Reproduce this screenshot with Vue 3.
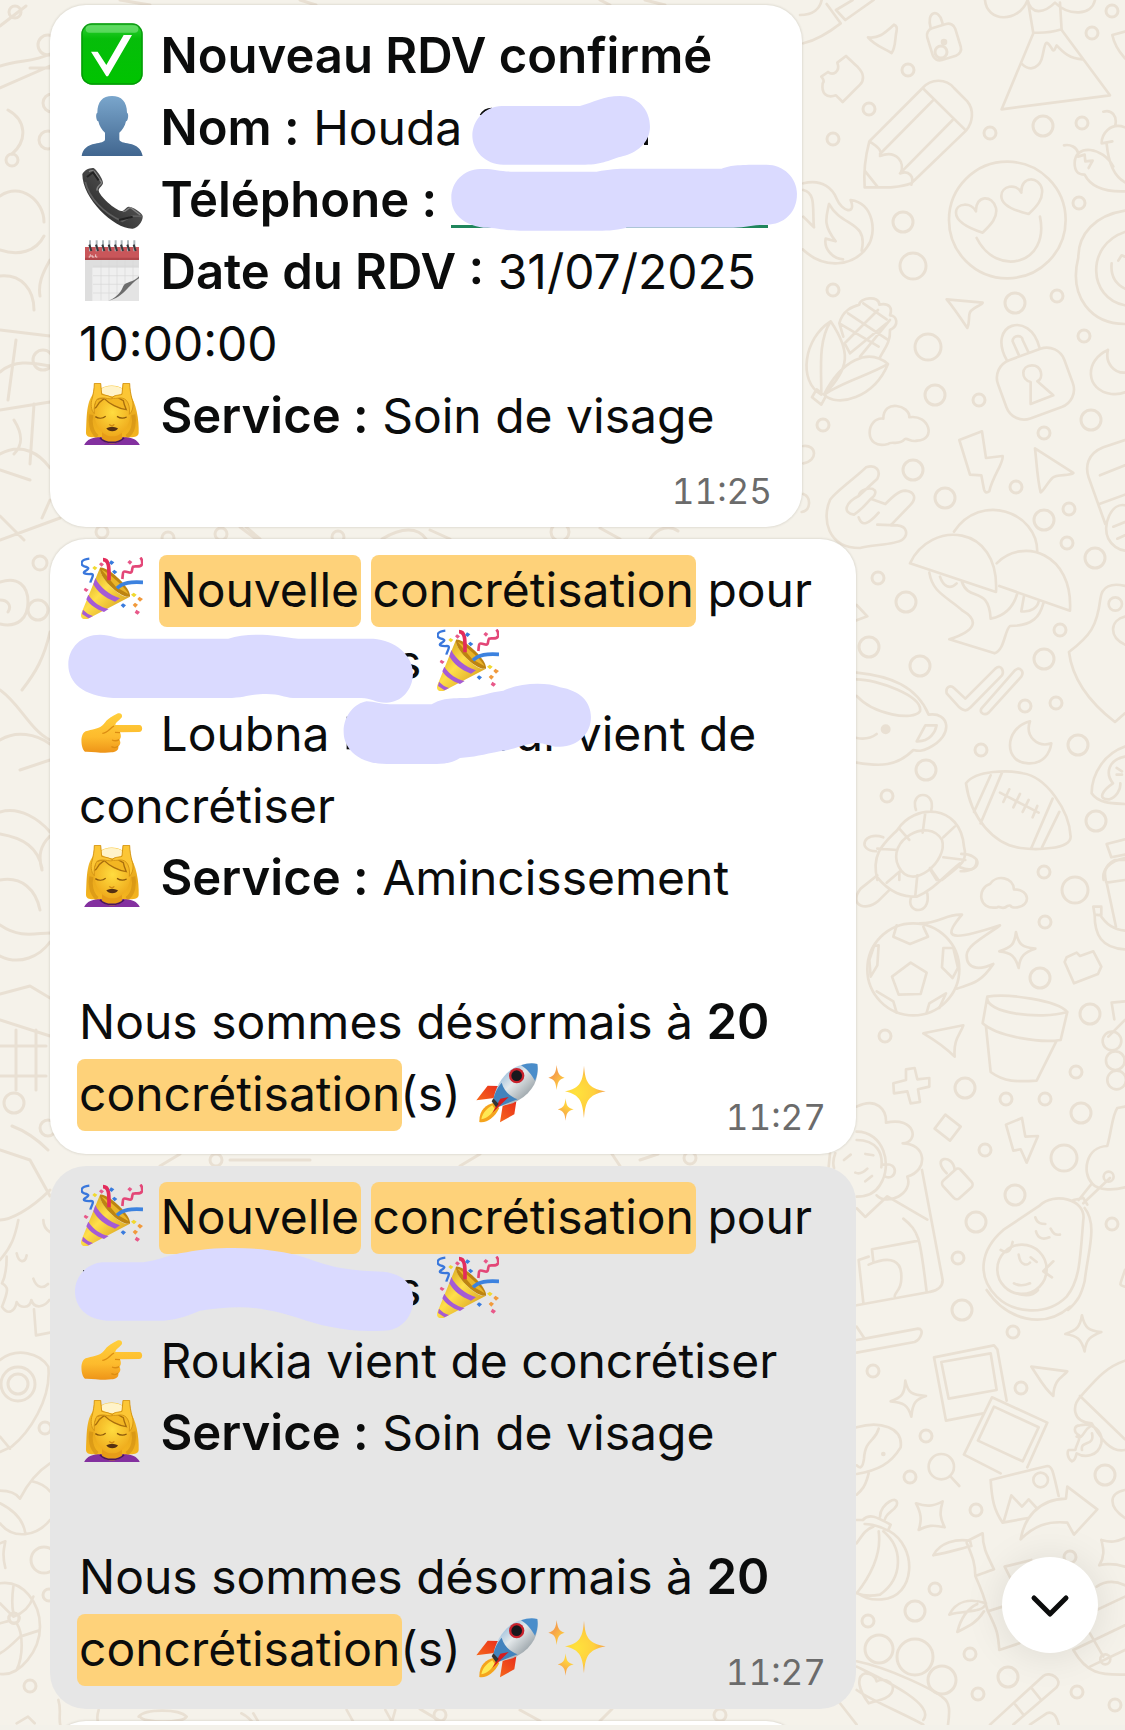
<script setup>
// Small rings scattered over the wallpaper: x, y, radius
const rings = [
  [941, 52, 6], [908, 70, 6], [869, 109, 6], [833, 139, 6], [990, 133, 6], [1043, 126, 10], [1082, 123, 6],
  [1092, 33, 6], [1112, 11, 6], [903, 222, 10], [913, 266, 13], [833, 290, 6], [1079, 203, 6], [1015, 303, 10],
  [1057, 296, 6], [928, 347, 13], [935, 395, 10], [979, 400, 6], [1084, 336, 6], [1091, 420, 10], [823, 425, 6],
  [1044, 433, 6], [913, 470, 10], [945, 498, 10], [1016, 487, 6], [1069, 509, 6], [1044, 520, 10], [1067, 543, 6],
  [1095, 558, 10], [878, 578, 6], [906, 602, 10], [869, 647, 10], [920, 666, 10], [1060, 630, 6], [1044, 659, 10],
  [1025, 706, 6], [1056, 703, 6], [1078, 745, 10], [981, 750, 6], [926, 770, 10], [887, 796, 6], [1096, 821, 10],
  [1044, 872, 6], [1075, 890, 13], [1045, 922, 6], [1040, 978, 10], [1090, 1014, 10], [885, 1036, 6],
  [965, 1088, 10], [1006, 1099, 6], [1045, 1099, 6], [1076, 1072, 6], [1081, 1113, 10], [985, 1150, 6],
  [1064, 1158, 13], [1015, 1195, 10], [976, 1222, 10], [1112, 1224, 6], [958, 1258, 6], [962, 1310, 10],
  [1013, 1332, 6], [873, 1371, 6], [1021, 1388, 6], [926, 1436, 6], [910, 1477, 6], [976, 1510, 6],
  [1105, 1475, 10], [1070, 1557, 6], [935, 1589, 6], [915, 1611, 10], [868, 1621, 6], [879, 1649, 14],
  [915, 1657, 18], [942, 1680, 14], [970, 1654, 6], [1008, 1677, 10], [978, 1694, 6], [1077, 1692, 6], [1115, 1705, 6],
  [48, 45, 10], [52, 103, 9], [48, 140, 9], [43, 360, 10], [15, 12, 6], [12, 160, 6], [40, 563, 7], [38, 610, 10],
  [14, 1103, 10], [48, 1128, 8], [18, 1384, 17], [18, 1384, 10], [45, 1428, 6], [44, 1560, 13], [49, 1595, 6],
  [30, 1686, 6], [14, 1618, 5], [102, 532, 6], [168, 538, 6], [221, 534, 6], [338, 537, 6], [216, 1160, 6],
  [690, 1158, 6], [440, 1715, 6], [560, 532, 9], [720, 1715, 6],
]
</script>

<template>
  <div class="screen">
    <svg class="defs" width="0" height="0" aria-hidden="true">
      <defs>
        <linearGradient id="gGreen" x1="0" y1="0" x2="0" y2="1"><stop offset="0" stop-color="#35d13a" /><stop offset=".25" stop-color="#06bd0a" /><stop offset="1" stop-color="#00c400" /></linearGradient>
        <linearGradient id="gBlue" x1="0" y1="0" x2="0" y2="1"><stop offset="0" stop-color="#7aa6cc" /><stop offset="1" stop-color="#41668f" /></linearGradient>
        <linearGradient id="gPhone" x1="0" y1="1" x2="1" y2="0"><stop offset="0" stop-color="#1d1d1d" /><stop offset=".5" stop-color="#444" /><stop offset="1" stop-color="#666" /></linearGradient>
        <linearGradient id="gGold" x1="0" y1="0" x2="1" y2="1"><stop offset="0" stop-color="#c98f0c" /><stop offset=".45" stop-color="#ffdf4a" /><stop offset="1" stop-color="#c98a10" /></linearGradient>
        <linearGradient id="gHand" x1="0" y1="0" x2="0" y2="1"><stop offset="0" stop-color="#ffcf3c" /><stop offset=".6" stop-color="#fdbb2d" /><stop offset="1" stop-color="#ee9418" /></linearGradient>
        <linearGradient id="gHair" x1="0" y1="0" x2="0" y2="1"><stop offset="0" stop-color="#f8c534" /><stop offset=".6" stop-color="#e9a91c" /><stop offset="1" stop-color="#f5b51f" /></linearGradient>
        <radialGradient id="gFace" cx=".5" cy=".4" r=".6"><stop offset="0" stop-color="#ffdc3f" /><stop offset="1" stop-color="#efaa1c" /></radialGradient>
        <linearGradient id="gRocket" x1="0" y1="0" x2="1" y2="1"><stop offset="0" stop-color="#5c9bd2" /><stop offset=".45" stop-color="#e3e8ea" /><stop offset="1" stop-color="#66727a" /></linearGradient>
        <linearGradient id="gFire" x1="1" y1="0" x2="0" y2="1"><stop offset="0" stop-color="#e2151b" /><stop offset="1" stop-color="#ff8a1c" /></linearGradient>
        <radialGradient id="gStar"><stop offset="0" stop-color="#ffe23c" /><stop offset=".6" stop-color="#ffd03e" /><stop offset="1" stop-color="#f6a24a" /></radialGradient>
      </defs>
      <symbol id="e-check" viewBox="0 0 186 186">
        <rect x="1" y="1" width="184" height="184" rx="32" fill="url(#gGreen)" />
        <rect x="3" y="3" width="180" height="180" rx="30" fill="none" stroke="#058a0a" stroke-width="4" opacity=".75" />
        <rect x="14" y="7" width="158" height="22" rx="11" fill="#8be88d" opacity=".55" />
        <path d="M30 86l20 0 26 40L128 36h25L81 160h-5z" fill="#fff" />
      </symbol>
      <symbol id="e-person" viewBox="0 0 186 186">
        <path d="M93 3c28 0 45 17 45 50 6 2 4 24-3 26-3 15-11 26-20 34v20c0 8 14 11 30 13 22 4 36 15 40 37H2c3-22 18-33 40-37 16-2 30-5 30-13v-20c-9-8-17-19-20-34-7-2-9-24-3-26C49 20 65 3 93 3z" fill="url(#gBlue)" />
      </symbol>
      <symbol id="e-phone" viewBox="0 0 186 186">
        <path d="M4 22C8 10 26 1 38 3c6 2 28 32 28 44 0 9-13 15-13 23 0 16 51 61 68 62 10 0 14-12 22-13 12 0 41 18 42 28 2 13-14 37-30 38C100 187 4 95 4 22z" fill="url(#gPhone)" />
        <path d="M24 14c10-6 14-4 18 2l20 30c-2 9-17 12-14 25" fill="none" stroke="#858585" stroke-width="4" />
        <path d="M13 45c10 47 55 94 111 118l30-16 29 1" fill="none" stroke="#606060" stroke-width="5" />
        <path d="M125 134c13 0 16-12 24-12l29 22" fill="none" stroke="#858585" stroke-width="4" />
        <path d="M114 159l41-10M18 30l18-14 17 24" fill="none" stroke="#222" stroke-width="6" />
      </symbol>
      <symbol id="e-calendar" viewBox="0 0 186 186">
        <path d="M12 62h162v66c-12 24-35 52-62 58H12z" fill="#efefef" />
        <path d="M12 60h162v26H34v100H12z" fill="#dedede" />
        <path d="M36 82h136M36 110h136M36 136h110M36 162h80M60 64v120M84 64v120M108 64v120M132 64v94M156 64v64" stroke="#d8d8d8" stroke-width="2" />
        <rect x="12" y="24" width="162" height="39" fill="#c9565a" /><path d="M12 56h162v7H12z" fill="#b04549" />
        <path d="M23 54h4l1-8m5 2v6h7m4-8v8h5" fill="none" stroke="#efd3d3" stroke-width="3" />
        <path d="M174 108c-16 24-39 17-46 33-7 24-28 38-48 45h94z" fill="#e4e4e4" />
        <path d="M174 112c-15 19-41 15-48 31-8 20-24 34-44 42 46-8 62-50 92-67z" fill="#6d6d6d" />
        <path d="M27 4v33M47 4v33M66 4v33M85 4v33M104 4v33M122 4v33M141 4v33M160 4v33" stroke="#aeb8bc" stroke-width="6" />
        <path d="M25 17l6 19M45 17l6 19M64 17l6 19M83 17l6 19M102 17l6 19M120 17l6 19M139 17l6 19M158 17l6 19" stroke="#37393d" stroke-width="6" />
      </symbol>
      <symbol id="e-massage" viewBox="0 0 186 186">
        <path d="M9 187c8-18 24-24 50-26h67c28 2 42 8 51 26z" fill="#83309f" />
        <path d="M15 150C18 95 15 42 50 22 80 0 120 2 145 34c20 22 30 78 28 116-1 13-17 13-31 13H44c-16 0-29-1-29-13z" fill="url(#gHair)" />
        <path d="M31 95c-5 20-1 52 18 66M157 95c5 20 1 52-20 66" fill="none" stroke="#c98710" stroke-width="12" opacity=".5" />
        <path d="M63 134h60v36c-17 15-43 15-60 0z" fill="#e79c18" />
        <path d="M57 164c15 19 56 19 72 0" fill="none" stroke="#4a1760" stroke-width="5" />
        <path d="M40 86c0-28 20-45 53-45s56 17 56 45c0 38-22 74-55 74S40 124 40 86z" fill="url(#gFace)" />
        <path d="M46 72c8-18 17-20 24-25 14 15 42 30 66 33-5-11-8-20-9-27l-31-17-51 13-9 30z" fill="#f3b622" stroke="#a96f0d" stroke-width="4" />
        <path d="M55 22c18-17 55-17 76 0-9 14-25 18-36 18-17 0-31-6-40-18z" fill="#fff3c9" />
        <path d="M40 1h19l3 33c12 4 27 3 32 13-12 3-28-7-45 1-8 9-11 24-9 44-11-11-11-32-7-44 4-15 7-32 7-47zM146 1h-20l-3 33c-12 4-23 1-30 11 12 5 29-7 43 7 8 9 11 24 9 42 12-11 14-32 8-46-4-15-7-32-7-47z" fill="#fcc635" stroke="#d69615" stroke-width="3" />
        <path d="M43 101c9 6 22 6 31-1M108 100c9 6 19 7 29 2" fill="none" stroke="#8b580b" stroke-width="4" />
        <path d="M85 124c4 5 11 5 15 0" fill="none" stroke="#d18a15" stroke-width="4" />
        <path d="M76 136c11-6 23-6 35 0-5 12-29 12-35 0z" fill="#553012" />
      </symbol>
      <symbol id="e-party" viewBox="0 0 186 186">
        <path d="M57 32c-6 24 63 98 90 87L24 184c-14 7-28 1-23-15z" fill="url(#gGold)" />
        <path d="M57 32c23-5 94 61 90 87-28 7-96-60-90-87z" fill="#bd8411" />
        <path d="M62 38c14 3 79 61 80 73l-36-20z" fill="#eab52a" />
        <path d="M43 63c13 28 42 50 74 61l-15 10C72 123 50 105 37 82zM22 113c15 23 37 38 61 43l-14 9c-23-8-41-20-53-38zM6 158c9 9 18 16 30 19l-13 7-20-13z" fill="#a55bd4" />
        <path d="M66 8c20 0 18 27 18 62" fill="none" stroke="#e32c5c" stroke-width="11" />
        <path d="M108 94c17-18 42-20 78-18" fill="none" stroke="#3c82df" stroke-width="11" />
        <path d="M25 5C-4 8-2 23 10 28c15 4 16 6 3 14-10 6-2 10 17 9 13 0-1 17-2 26" fill="none" stroke="#3977dc" stroke-width="7" />
        <path d="M124 66c3-20-2-27 18-20 15 5 9-10 14-17 8-3 24 4 27-8 2-9 0-14-5-19" fill="none" stroke="#e34677" stroke-width="8" />
        <path d="M90 10l10 6-8 8-8-6zM100 38l9 7-8 7-8-8zM126 139l9 6-8 8-8-8z" fill="#397bdd" />
        <path d="M12 92l11 6-7 7-8-6zM146 9l8 6-7 8-8-7zM60 16l9 6-7 7-8-7zM166 158l11 7-7 8-9-6z" fill="#e85889" />
        <path d="M40 27l9 5-7 8-8-7zM158 107l9 6-8 8-9-8z" fill="#f1d92e" />
        <path d="M175 119l11 7-9 8-8-8zM162 137l9 6-8 9-8-8z" fill="#f19a3c" />
      </symbol>
      <symbol id="e-point" viewBox="0 0 186 186">
        <path d="M14 91c17-7 43-6 55-23 10-14 27-24 42-31 11-3 16 8 9 15-6 7-16 12-17 20h72c11 0 12 21-1 21l-57 1c5 11 2 18-2 22 6 8 2 16-3 20 2 12-9 18-21 18-27 4-54-3-79-2-12-8-17-52 2-61z" fill="url(#gHand)" />
        <path d="M64 97c14 0 22-15 35-22M102 94l15 1M93 117c9 4 17 2 22-1M91 137c8 4 15 3 20-1" fill="none" stroke="#dc8d12" stroke-width="4" />
      </symbol>
      <symbol id="e-rocket" viewBox="0 0 186 186">
        <path d="M67 75L35 74 1 118l54-7zM121 121l-6 39-43 24 8-50z" fill="url(#gFire)" />
        <path d="M52 126c-20 5-43 19-42 57 22 4 46-13 60-42z" fill="#f5a41d" />
        <path d="M49 133c-15 9-30 23-33 42 18-4 29-14 40-31z" fill="#ffe954" />
        <path d="M184 9c7 52-19 92-74 118l-42 10-16-21c6-39 32-81 67-98 22-10 44-14 65-9z" fill="url(#gRocket)" />
        <path d="M184 9c3 17 0 34-7 50-10-17-24-36-42-46 17-6 34-8 49-4z" fill="#4a8dca" />
        <path d="M77 65c7 25 24 41 48 50l-57 22-16-21c3-18 11-35 25-51z" fill="#4283bd" />
        <circle cx="122" cy="44" r="23" fill="#c8222c" /><circle cx="122" cy="44" r="16" fill="#17181d" />
        <path d="M98 108l-49 48 24-43z" fill="#d41d20" /><path d="M52 112l16 17-8 10-13-18z" fill="#333" />
      </symbol>
      <symbol id="e-sparkles" viewBox="0 0 186 186">
        <path d="M120 14c4 47 10 67 65 77-55 10-61 34-65 81-4-47-10-71-57-81 47-10 53-30 57-77zM38 12c3 23 6 33 24 38-18 5-21 13-24 37-3-24-6-32-25-37 19-5 22-15 25-38zM65 112c2 21 5 29 24 33-19 5-22 13-24 34-3-21-6-29-24-34 18-4 21-12 24-33z" fill="url(#gStar)" />
      </symbol>
    </svg>

    <main class="chat">
      <svg class="wallpaper" aria-hidden="true">
        <g class="rings"><circle v-for="(r, i) in rings" :key="i" :cx="r[0]" :cy="r[1]" :r="r[2]" /></g>
        <g transform="translate(800 0) scale(.3333)">
          <path d="M0 45c40 0 60-20 65-45M80 12l42 58C90 95 50 120 10 130M108 30l28 30 85-60M108 30l50-30" />
          <path d="M204 112c30 4 45-8 78-38 8 3 10 8 8 18-6 24-2 50-15 67-25-15-50-22-71-47z" />
          <rect x="388" y="76" width="88" height="100" rx="22" transform="rotate(-17 432 126)" /><path d="M392 84c-14-50 24-60 34-20l2 8" /><circle cx="432" cy="126" r="6" class="dot" />
          <path d="M138 168l36 34c20 20 18 40 6 52l-52 52-20-20c-30 10-44-6-40-36 8-8 0-14-4-20l20-14c14 12 38 0 28-28z" />
          <path d="M208 424L368 264c24-28 70-30 94 0l40 40c20 24 18 62-4 88L334 550c-40 16-90 12-140 12-4-50 4-100 14-138zM368 264l130 128M402 298L240 462M458 360L300 520M208 424c24 14 40 30 32 44 50-20 76 20 62 52 24-10 42 10 32 34M194 512l40 50" />
          <path d="M555 0c5 66 100 72 128 0M683 0c10 46 50 40 82 8 40 40 110 40 120-8M685 10l15 90-95 228 325-42-145-196-5-82M700 98c40 2 60-2 85-10M664 190c30 30 58 10 64-24 8-40 8-50 28-20 6 16 12-8 14-10 20 22 40 40 78 42" />
          <path d="M975 95l-38 10c6 30 20 50 38 70M910 335c26-8 42 14 36 40M975 382c-44-16-70 20-70 48l32-6M920 432c6 60 26 100 55 115M792 436c20-4 38 6 42 22M940 500c-30-60-116-70-116-10 0 30 16 34 30 34 20 40 70 52 121 50M834 470l20-6 2 20 22-2-12 22" />
          <circle cx="622" cy="660" r="175" />
          <path d="M548 698c-60-20-80-40-80-60 0-30 46-32 60-4-2-50 50-50 60-10 6 30-18 52-40 74zM686 642c-60-14-82-34-82-54 0-30 44-40 60-10-2-52 54-50 62-10 4 30-16 52-40 74zM530 714c60 120 220 80 190-64" />
          <path d="M10 550c60-15 90 20 100 46 16 40 60 50 42 4 70 10 80 100 50 140-40 60-130 70-194 8M10 570c40 10 26 60 32 112L10 650M185 752c20-90-60-70-98-140-8 40-20 60 20 112l-30-8c-6 30 20 60 52 62" />
          <path d="M975 632c-90 14-140 70-140 140-30 120 40 200 140 200M975 696c-120 40-110 200 0 220M935 790c-4 40 16 64 40 76M955 782l10-16 10 4" />
          <path d="M440 898l108 10c-4 10-40 16-40 36-2 20 0 26-6 40-20-30-40-60-62-86z" />
          <path d="M92 964c-80 50-100 180-28 220 0-80-10-160 28-220 60 90 60 140-20 220 40 40 150 10 192-92-60-50-140-10-192 92 60-40 140-60 192-92M50 1168l28 20-14 26-28-22zM118 970c10-40 40-50 60-56 0-20 60-30 60 0 30-6 40 10 32 32 20 0 30 30 0 44 2 40-20 60-32 86M118 970l118 70M144 940l120 80M190 910l70 48M134 1030l100-100M150 1060l110-90M180 1070l90-110M130 1010l-12-40M150 1060l-16-30" />
          <path d="M620 1080c-60-110 70-150 98-38M656 1064l-18-40c0-20 30-20 30-4l18 38" /><rect x="600" y="1058" width="212" height="186" rx="56" transform="rotate(-20 706 1150)" /><path d="M692 1146c-30-6-30-50 4-50 30 0 36 40 16 48l48 42-68 26z" />
          <path d="M924 1050c-70 30-70 120 10 132 20 2 30 0 41-5M924 1050c-10 40 20 70 51 68" />
          <path d="M250 1256c0-60 80-40 78-4 60-10 82 68 24 70-20 6-30-10-38-4-16 20-40 4-50 14-76 20-66-82-14-76z" />
        </g>
        <g transform="translate(800 430) scale(.3333)">
          <path d="M478 30l68-26 12 80 50-6c4 20-30 60-40 106-10 8-14 0-16-6l-8-42-34-2zM705 55l115 74c-10 10-50 2-62 14-14 12-24 36-36 44-10-40-12-90-17-132z" />
          <path d="M90 210c10-20 80-70 108-98 30-10 46 10 34 34l-56 52c-40 20-50 50-14 56 30-20 40-40 60-56 20-30-40-30-46 0M256 222l-40-14M256 222c20-20 40-40 60-40 30 4 34 24 14 44l-58 60M176 262c10 30 30 20 60-14M232 284l60 2c30 2 34 30 14 44-20 14-90 14-126 24-100 0-114-90-90-144M10 48c40-5 45 45 0 52M10 192c25 10 22 50-5 54" />
          <path d="M330 400c60-130 270-120 258 86zM462 305c80-120 250-60 250 60M590 400c80-80 230-30 220 142L598 468M388 428c10 60 50 70 100 114 50 30 40 60-40 86l136 42c30-10 30-70 46-82 70 0 90-30 100-68M486 456c20 60 80 10 86 110 50-10 70-40 80-76M420 440c10 30 30 40 50 20M672 498l-8 46c30 4 50-14 52-30" />
          <path d="M440 790c-4-20 12-26 22-16l34 32 90-90c20-16 26 10 20 20l-94 96c-12 12-20 12-34 0zM544 836l102-116c14-10 28 4 18 20l-98 108c-12 10-28 2-22-12z" />
          <path d="M690 874c-80 20-80 130 0 126 40 0 60-30 64-60-40 14-80-20-64-66z" />
          <path d="M170 525l32 34-32 12M170 728c100 10 180 40 216 126 60-10 80 60 0 100-20 10-30 10-46 6-50 50-100 50-170 38M170 748c60 0 200 50 190 96-20 30-140 10-190-46M350 934l26-48h34c-4 20-20 50-60 48zM170 924c20 4 44 0 60-12" /><circle cx="257" cy="898" r="11" class="dot" />
          <path d="M498 1060c30-40 130-40 170-30 70 10 140 110 144 190 0 40-110 40-150 34-80-10-150-90-164-194zM572 1036l-50 110M606 1028l-64 152M758 1106l-64 148M778 1146l-52 106M600 1088l116 60M628 1078l-18 38M660 1092l-20 40M686 1110l-18 36M712 1128l-14 34" />
          <path d="M975 30l-65 22c-50 20-54 60-44 90l50 140M900 136l75-30M898 222l77-28M975 226c-40-10-70 60-50 100 10 20 30 34 50 36M940 290l35-14M952 326l23-10M975 468c-40-10-70 0-74 40-10 80-30 110-94 158 10 80 60 150 138 210l30-26M975 560c-45 10-50 60 0 84" /><circle cx="946" cy="522" r="20" />
          <path d="M975 950c-60 20-100 80-100 140 20 30 60 30 100 32M975 980c-50 10-60 50-36 80-30 20-50 50-10 48 20-6 34-30 32-48M950 1014l16 10M950 1034h16" />
          <path d="M348 1140c-20-60 60-60 46 0M250 1222c-60-20-80 40-22 42M484 1272c60 0 70 50-2 52M232 1350c-20-80 20-110 60-150 50-80 190-80 200 50 14 50-20 60-66 100M296 1310c-40-80 90-150 130-80 20 60-90 160-130 80M376 1148l-8 60M296 1194l32 36M464 1190l-34 32M232 1256l60 4M430 1282l66 8M390 1318l20 32M298 1328v22" />
          <path d="M975 1228l-55 14 14 40 41-8M975 1284c-50 10-70 40-64 66" />
        </g>
        <g transform="translate(800 860) scale(.3333)">
          <path d="M230 50c40 50 80 60 120 60 50-20 80-60 130-100M352 46l-6 60M300 34l-40 34M390 24l28 40M232 46l-50 40c-40 50 20 74 60 30l28-28M334 110c-20 50 60 60 48-10M530 0c0 30-20 34-50 22" />
          <path d="M570 72c20-30 70-20 72 16 50 0 50 50 10 54-30 4-10-10-30-4-14 14-24-2-30 4-60 10-60-60-22-70z" />
          <circle cx="340" cy="328" r="138" />
          <path d="M332 308l48 30-18 64-66 2-20-54zM290 196l-10 34 50 22 54-22-14-30M430 264h30l14 60-16 30-32-32zM236 256l-4 60-20 34-4-50 14-42zM230 394l50 30 10 34M380 458l8-28 50-30-20 44" />
          <path d="M360 190c60 0 80-30 126-26-50 60-60 90 114 32-40 30-100 60-100 90 0 50 50 40 80 26-40 60-70 60-110 74" />
          <path d="M648 216c8 40 20 46 58 50-30 10-46 20-50 58-10-36-22-46-58-50 36-12 46-20 50-58zM800 292l30-14 10 10 40-14 24 46-10 22-72 28-28-64z" />
          <path d="M562 410c60-10 210 10 240 46l-20 84c-60 10-190-10-234-50zM562 410c-10 50 160 70 240 46M558 500l14 136c40 30 80 30 138 26l60-120" />
          <path d="M370 520l120-24c-10 30-30 40-26 94-30-30-60-50-94-70zM318 628l26-4 8 34 36-4v26l-34 8 6 38-28 4-10-36-40 6-2-30 38-10zM436 764l46 36-32 42-46-36zM618 794l48-20 10 56 38-2-34 80-18-40-22 4z" />
          <path d="M170 740c60-30 90 10 88 48 90-20 100 60 50 62 70 0 80 80 14 100 20 50-60 90-92 56M170 815c80 0 110 100 70 160-15 25-40 35-70 35M170 840c60 0 80 40 74 82M90 880l-4 40M106 880c-8 20-8 30-4 44M250 914c50-10 40 50 6 36M132 900l20-16M196 882l24 4M166 938c14 6 24 0 36-12M196 964l20-16M170 1045l26 26 66-62 120 70M310 1076c50 40 50 60 70 220M366 930l62 330c0 30-30 34-40 36L170 1336M216 1168l140-26M216 1168l4 36M206 1214c70-30 100-10 98 40 0 40-20 40-20 56M176 1200l14 128M176 1200l30-10" />
          <path d="M440 940c-50-50 20-60 24-10" /><rect x="436" y="936" width="72" height="72" rx="12" transform="rotate(-42 472 972)" />
          <path d="M720 1036c40-40 140-20 130 44-10 120-10 180-50 230-60 60-160 50-210 0-60-60-50-140 20-200zM854 1044c40 50 10 130 0 220-10 40-20 60-50 86M836 1020l40-50M850 1030l80-76M820 1020l30-6 12 20M876 970c-30-30-20-110 46-112 14-50 14-90 30-114l23-4M876 970c20 24 70 20 99 12" /><circle cx="666" cy="1228" r="74" /><circle cx="926" cy="950" r="15" />
          <path d="M602 1170c20 14 30 4 36-24M760 1204l-30 30 26 18M706 1072c6 20 20 20 30 20M708 1114c6 26 26 24 40 18M752 1106c8 16 14 20 28 18M656 1184c6 40 30 30 34 24M692 1192l18 14M642 1270c14 8 34 6 48 0" />
          <path d="M975 60l-55 8 28 132M880 140h24v26l-20-2zM884 164c0 60 20 100 90 104M900 164c20 30 40 44 75 48M975 0l-30 0c-40 20-30 50-26 68M975 424l-40 4 8 50M975 480l-50 50M975 1230c-16 50-20 44 0 50" />
          <circle cx="936" cy="543" r="28" /><circle cx="946" cy="602" r="28" /><circle cx="950" cy="660" r="28" />
        </g>
        <g transform="translate(800 1290) scale(.3333)">
          <path d="M560 0c60 90 170 120 250 50M650 10c30 10 50 6 64-10M170 110l24 36 160-30c20 0 10 30-10 40L170 188M170 150l24-4" />
          <path d="M846 76c8 38 20 46 58 50-32 12-46 22-50 58-10-38-22-46-58-52 36-12 44-22 50-56zM316 272c8 38 20 42 62 46-32 10-40 22-44 62-10-36-24-42-62-46 34-12 42-22 44-62zM348 640c30 10 50 10 80-6-10 34-8 50 6 78-36-8-50-6-78 8 10-30 8-50-8-80zM904 750c30 8 44 6 71-6M904 750c8 30 10 50-6 76 26-6 50-4 77 4" />
          <path d="M694 230l108 14c-10 16-40 20-42 74-30-26-46-60-66-88z" />
          <path d="M402 202l180-36 10 12 28 154M402 202l36 190 112-22M424 216l148-26 18 110-144 26zM576 322l166 76-60 134M576 322l-84 172 110 56M582 350l134 62-48 102-134-62zM572 570l170-42c14 0 16 10 34 90M572 570c4 60 10 90 36 128l76-14M612 692l22-76 32 34 20-22 24 26M662 748c10-60 50-120 136-122l4-36 90 68-70 76-20-36c-60-6-100 10-140 50z" /><circle cx="722" cy="570" r="22" />
          <circle cx="424" cy="530" r="38" /><path d="M452 560l26 28" />
          <path d="M170 412c70-20 140 0 132 60-30 50-70 70-132 80M236 416c-10 40-40 30-44 90-4 30-12 30-22 20M206 550c-10 40-20 50-36 64M240 680c0-40 60-70 50-34-10 20-30 20-36 44M188 690c20-20 40-10 84 14l-8 18c-30-16-50-20-70-20M170 690h20M170 760c20-30 30-44 50-50M236 724c10 70-30 140-66 186M250 724c60 50 60 140-10 190-30 6-50 4-70-4M266 722c90 50 80 200-20 206-40 4-60-10-76-20" /><circle cx="250" cy="492" r="3" class="dot" />
          <path d="M400 796c20-40 70-50 110-44l4 16c-40 10-70 20-114 28M508 750l40-20c0 40 10 60 34 108l-56 20c0-40-10-60-26-100M526 858c40 90 30 90 38 106l44-14M564 964c30 60 30 70 34 116l60-20M448 974c20-40 60-50 110-34-10 30-60 20-110 34zM472 1026c10-40 30-70 60-84M472 1026c40-20 60-30 80-62M614 830l80-20M614 830l20 40" />
          <path d="M975 212c-60 20-90 60-130 104-30 30-30 80 30 84 20 30 50 90 100 80M840 318l135 130M826 480c4-20 14-26 12-44-20-10-16-30 2-30 40-10 70 20 64 54-10 40-50 44-74 30-4 16-6 20-14 24-16-10-14-30-10-34zM830 440c20 10 20-20 40-30M846 480c-6-30 40-10 30-50M975 600c-50 10-50 50 0 84M890 890c30-20 60-16 85-4M890 960l85-40M820 1080c40 70 80 76 155 74M820 1080l155-74M870 1130l105-50M870 1030l40 70" /><circle cx="916" cy="1108" r="15" />
          <path d="M170 1114c100 20 240 90 260 110 20 14 20 40 14 80M170 1130c60 30 240 110 200 160M170 1200c40 30 140 70 200 104M206 1240c-30-40-40-80-10-90 20 0 30 10 34 24 30-14 60 10 44 36-14 20-40 20-68 30zM570 1304l160-146c20-16 60 10 40 34l-130 112M646 1244l24 30M696 1196l26 32M690 1304l50-34c20-8 30 10 36 34M120 1240l50 64" />
        </g>
        <g transform="translate(0 1220) scale(.3333)">
          <path d="M55 0c-10 50-20 80-55 120M130 0c0 20 10 30 20 36M50 100c6 30 26 30 30 6M100 176c10 30 30 30 44 16M20 110c0 30-4 60-14 80 20 10 20 20 0 70 20 30 40 10 44-14 10 20 40 20 44-6 10 30 40 20 54 0M102 268l6 78 42-8" />
          <path d="M0 420c50-40 120-20 145 20 10 100-60 200-110 240L0 696M0 650l30 36M0 812c30 0 50 10 60 24 20-40 50-80 90-106M96 784c20 4 40 14 54 30M0 850c40 20 70 50 76 90M0 910c40 50 110 40 150-10M0 970l16-6c-4 20-10 40 0 80" />
          <path d="M0 1090c70-10 120 60 120 130S60 1370 0 1362M0 1150l40 40c30-10 50-30 60-60M0 1210l30-8M50 1210c20 30 20 100 0 140M60 1250l56-18M0 1300c20-10 40-30 60-50M40 1100c-4 30-4 60 0 80" /><circle cx="42" cy="1195" r="16" />
          <path d="M50 1510l34-20 20 20M175 1440c10 30 0 50 6 76M296 1470c-6 20-6 30 0 40M416 1490c20-24 120-24 144 0M420 1490c10 20 130 20 140 0M724 1480c20 10 30 20 40 36M760 1480l20 34M1040 1470l20 36M1156 1470l20 36 10-36" />
        </g>
        <g class="edge">
          <path d="M0 26l26-20M0 66c18-6 34-4 50-12M0 88l50-22M50 68H30M8 110c18 10 20 30 4 44M0 196c20-14 44 4 44 26M0 250c18 6 36 2 44-14M50 260c-8 14-12 24-10 36M0 276c22-2 34 14 34 34M0 330l50 6M0 372c14-12 30-10 50-6M16 340l-8 60M0 410l50-8M34 404l-4 60M0 454c22-12 40 0 50 14M0 470l30 10M14 420c10 16 8 26 0 34M50 500l-8 18M0 516l24 24M0 540l60-22" />
          <path d="M0 582c18-6 28 4 28 20s-10 26-28 22M0 600c8 0 12 6 8 12M50 632c-6 26-14 40-28 58M0 690c20 14 30 40 50 50M0 740c16-10 36-6 50 4M20 770l30-10M0 812c20-6 40 8 50 20M0 834c24 4 38 14 42 34M50 836c-10 10-12 20-8 34M0 880c22-4 36 10 40 30M0 925c20 14 36 8 50 8M0 956c20 10 40 0 50-14M0 994l30-8 20 12M0 1046h46M0 1076h46M16 1030v60M36 1030v60M0 1020l50 16M12 1126c16 6 26 14 36 24M0 1150l30 10 20 36M50 1190c-20 20-40 30-50 30" />
          <path d="M240 527l16 12M246 527l14 12M382 539c20-12 36-12 44 0M430 530l20 9M600 528l20 11M650 539c8-12 20-14 28-8M180 1154l-20 12M230 1160h80M480 1154l-20 12M612 1154l8 12M640 1160l18-6M120 0l30 5M300 0l16 5M600 0l10 5M645 0l20 5M420 1709l20 12M520 1710l20 11M600 1721l12-12" />
        </g>
      </svg>

      <article class="bubble narrow">
        <p class="line"><svg class="emoji"><use href="#e-check" /></svg> <b>Nouveau RDV confirmé</b></p>
        <p class="line"><svg class="emoji"><use href="#e-person" /></svg> <b>Nom :</b> Houda</p>
        <p class="line"><svg class="emoji"><use href="#e-phone" /></svg> <b>Téléphone :</b> <a class="phone" href="#tel" aria-label="Numéro masqué"></a></p>
        <p class="line"><svg class="emoji"><use href="#e-calendar" /></svg> <b>Date du RDV :</b> 31/07/2025</p>
        <p class="line">10:00:00</p>
        <p class="line"><svg class="emoji"><use href="#e-massage" /></svg> <b>Service :</b> Soin de visage</p>
        <time class="time own-row">11:25</time>
        <svg class="scribble" aria-hidden="true">
          <g transform="translate(380 -5) scale(.3333)">
            <path d="M152 346c6-12 20-20 34-20" class="ink thin" /><path d="M654 400v35h-12v-20z" fill="#0b0c0c" />
            <path d="M215 318h235c40-10 70-30 120-30 52 0 90 40 90 92 0 50-45 80-80 88-40 10-60 26-115 26H220c-55 0-93-42-93-88s40-88 88-88zM150 507c40-2 60 8 100 8h250c40-8 60-9 100-9h275c30-12 60-12 135-12 50 0 91 38 91 88 0 56-40 92-91 92-40 0-60 9-100 9H590c-40 9-60 9-100 9H270c-50 0-60-9-110-9-60-10-96-40-96-90 0-46 36-84 86-86z" />
          </g>
        </svg>
      </article>

      <article class="bubble">
        <p class="line"><svg class="emoji"><use href="#e-party" /></svg> <mark>Nouvelle</mark> <mark>concrétisation</mark> pour</p>
        <p class="line"><span class="hidden-name"></span>s <svg class="emoji"><use href="#e-party" /></svg></p>
        <p class="line"><svg class="emoji"><use href="#e-point" /></svg> Loubna <span class="hidden-surname"></span>our vient de</p>
        <p class="line">concrétiser</p>
        <p class="line"><svg class="emoji"><use href="#e-massage" /></svg> <b>Service :</b> Amincissement</p>
        <p class="line"></p>
        <p class="line">Nous sommes désormais à <b>20</b></p>
        <p class="line"><mark>concrétisation</mark>(s) <svg class="emoji"><use href="#e-rocket" /></svg><svg class="emoji"><use href="#e-sparkles" /></svg></p>
        <time class="time">11:27</time>
        <svg class="scribble" aria-hidden="true">
          <g transform="translate(-10 1) scale(.3333)">
            <path d="M925 530v98" class="ink" />
            <path d="M180 284c35 0 45 12 75 12h310c40-14 100-14 145-8 25 2 45 8 65 8h225c65 4 119 50 119 104 0 50-35 88-80 88-35 0-45-14-75-14H760c-30-2-40-12-80-12-60 0-60 12-120 12H220c-90-6-135-46-135-100 0-52 40-90 95-90z" />
            <path d="M980 484C1005 484 1020 493 1050 493H1175C1200 478 1220 474 1280 474C1320 470 1350 456 1390 452C1440 428 1520 426 1560 442C1620 452 1653 485 1653 532C1653 580 1615 620 1560 620C1530 622 1510 604 1480 610C1440 616 1430 628 1380 634C1330 644 1300 652 1260 654C1240 666 1220 672 1190 672H1040C960 672 911 630 911 575C911 525 945 490 980 484z" />
          </g>
        </svg>
      </article>

      <article class="bubble pressed">
        <p class="line"><svg class="emoji"><use href="#e-party" /></svg> <mark>Nouvelle</mark> <mark>concrétisation</mark> pour</p>
        <p class="line"><span class="hidden-name"></span>s <svg class="emoji"><use href="#e-party" /></svg></p>
        <p class="line"><svg class="emoji"><use href="#e-point" /></svg> Roukia vient de concrétiser</p>
        <p class="line"><svg class="emoji"><use href="#e-massage" /></svg> <b>Service :</b> Soin de visage</p>
        <p class="line"></p>
        <p class="line">Nous sommes désormais à <b>20</b></p>
        <p class="line"><mark>concrétisation</mark>(s) <svg class="emoji"><use href="#e-rocket" /></svg><svg class="emoji"><use href="#e-sparkles" /></svg></p>
        <time class="time">11:27</time>
        <svg class="scribble" aria-hidden="true">
          <g transform="translate(-50 54) scale(.3333)">
            <path d="M249 154h6M864 282h8" class="ink thin" />
            <path d="M310 127h120c50-6 70-22 130-30 70-16 200-18 290 0 80 14 120 44 210 52 60 8 90 0 130 16 35 15 52 45 50 80-4 50-40 87-90 87-60 4-110-2-160-12-70-12-120-40-190-50-60-14-130-8-200 2-50 20-80 32-140 30H320c-60-4-95-40-95-88 0-44 35-85 85-87z" />
          </g>
        </svg>
      </article>

      <article class="bubble next"></article>
    </main>
    <div class="bottom-edge"></div>

    <button class="to-bottom" type="button" aria-label="Aller en bas">
      <svg viewBox="0 0 96 96" aria-hidden="true"><path d="M32 41l16 16 16-16" /></svg>
    </button>
  </div>
</template>

<style>
body { margin: 0; }
</style>

<style scoped>
.screen {
  position: relative;
  display: flex;
  flex-direction: column;
  height: 100vh;
  overflow: hidden;
  background: #f5f2ea;
  color: #0b0c0c;
  font-family: Inter, "Noto Sans", sans-serif;
}
.defs { position: absolute; }
.chat {
  position: relative;
  flex: 1;
  min-height: 0;
  box-sizing: border-box;
  display: flex;
  flex-direction: column;
  align-items: flex-start;
  gap: 12px;
  padding: 5px 24px 0 50px;
  overflow: hidden;
}
.wallpaper {
  position: absolute;
  inset: 0;
  width: 100%;
  height: 100%;
  fill: none;
  stroke: #e9e0d3;
  stroke-width: 8;
  stroke-linecap: round;
  stroke-linejoin: round;
}
.rings, .edge { stroke-width: 3; }
.dot { fill: #e9e0d3; }
.bubble {
  position: relative;
  flex: none;
  box-sizing: border-box;
  width: 806px;
  max-width: 100%;
  padding: 17px 29px 22px;
  border-radius: 36px;
  background: #fff;
  box-shadow: 0 0 2px 1px rgba(60, 50, 30, 0.1);
}
.narrow { width: 752px; padding-bottom: 15px; }
.pressed { background: #e6e6e6; box-shadow: none; }
.next { width: 752px; height: 72px; }
.line {
  height: 72px;
  margin: 0;
  font-size: 48px;
  line-height: 68px;
  white-space: nowrap;
}
.line b { font-size: 49px; font-weight: 600; }
.emoji {
  width: 62px;
  height: 62px;
  margin: 0 4px 0 2px;
  vertical-align: -12px;
}
mark {
  margin: 0 -2px;
  padding: 5px 2px 8px;
  border-radius: 8px;
  background: #fed27a;
  color: inherit;
}
.phone {
  display: inline-block;
  width: 317px;
  height: 46px;
  border-bottom: 3px solid #20865c;
  vertical-align: -11px;
}
.hidden-name { display: inline-block; width: 317px; }
.hidden-surname { display: inline-block; width: 143px; }
.time {
  position: absolute;
  right: 30px;
  bottom: 16px;
  color: #6b6b6b;
  font-size: 35px;
  font-variant-numeric: tabular-nums;
  line-height: 42px;
}
.own-row {
  position: static;
  display: block;
  padding: 16px 1px 0;
  text-align: right;
}
.scribble {
  position: absolute;
  inset: 0;
  width: 100%;
  height: 100%;
  overflow: visible;
  fill: #dadaff;
  pointer-events: none;
}
.ink { fill: none; stroke: #0b0c0c; stroke-width: 10; }
.thin { stroke-width: 6; }
.bottom-edge { flex: none; height: 5px; background: #f3f1ea; }
.to-bottom {
  position: absolute;
  right: 27px;
  bottom: 77px;
  width: 96px;
  height: 96px;
  padding: 0;
  border: 0;
  border-radius: 50%;
  background: #fff;
  box-shadow: 0 2px 40px rgba(0, 0, 0, 0.1);
}
.to-bottom svg { display: block; }
.to-bottom path {
  fill: none;
  stroke: #0b0c0c;
  stroke-width: 5;
  stroke-linecap: round;
  stroke-linejoin: round;
}
</style>
